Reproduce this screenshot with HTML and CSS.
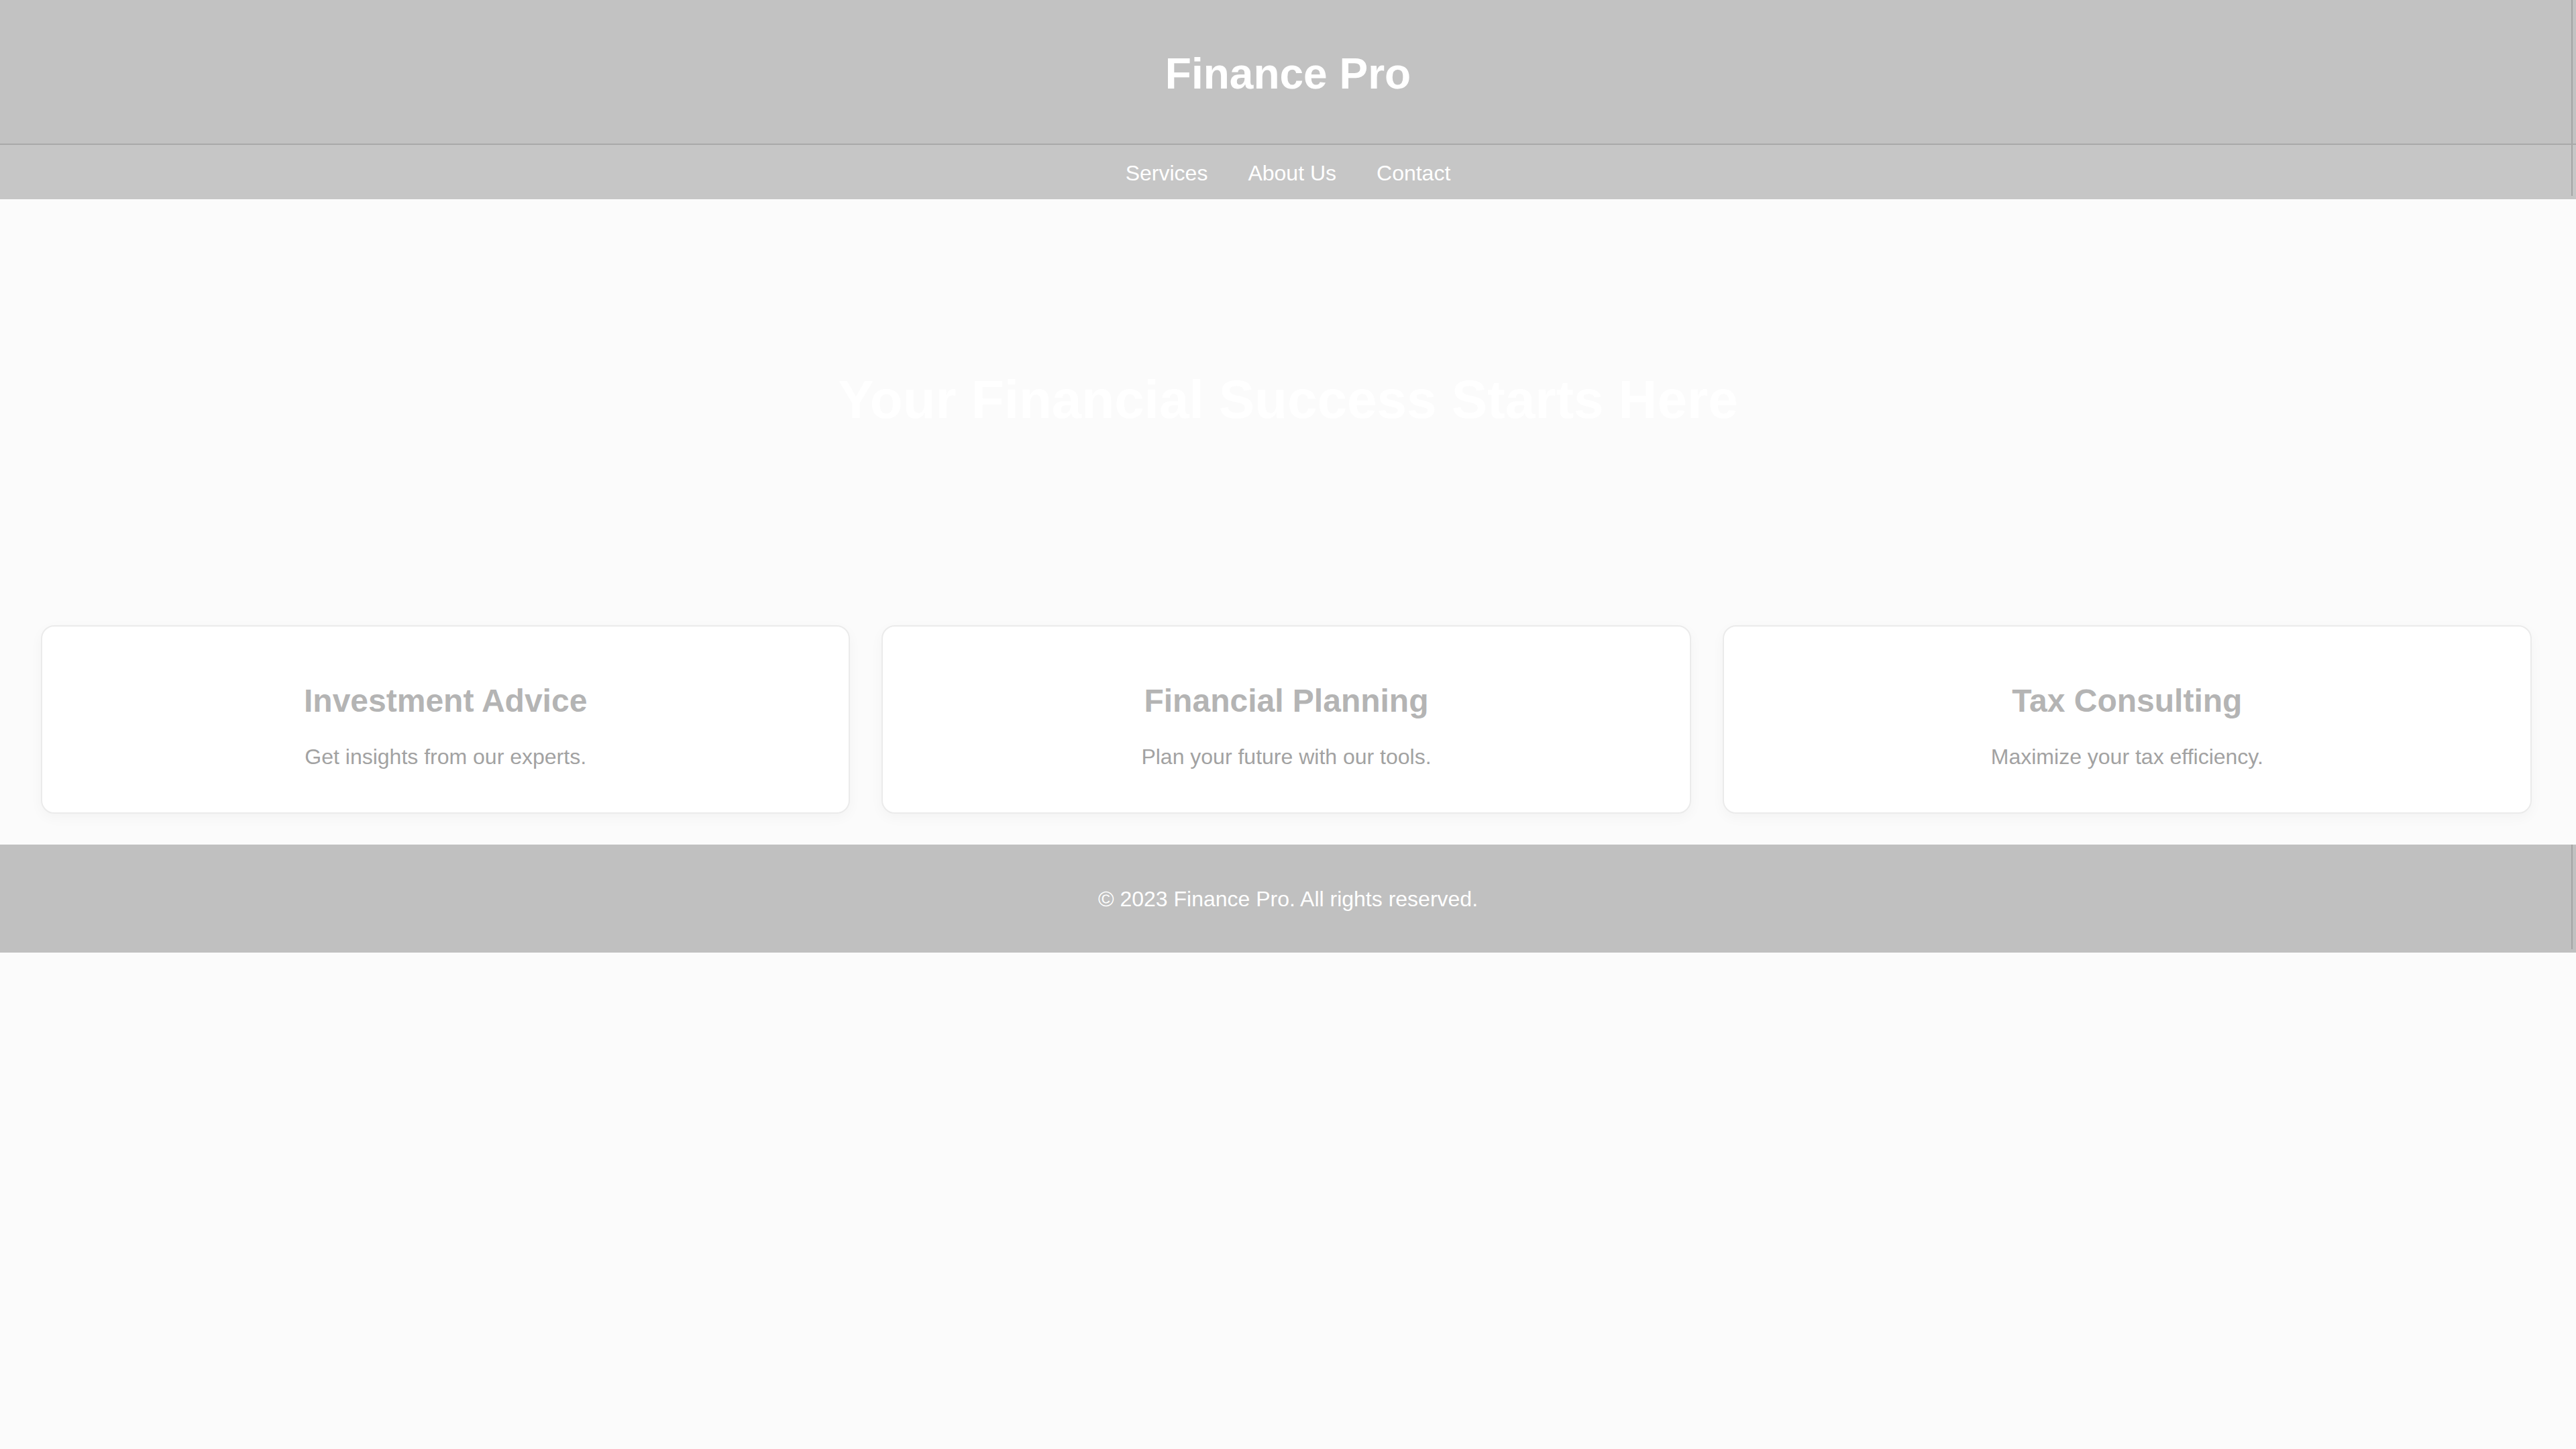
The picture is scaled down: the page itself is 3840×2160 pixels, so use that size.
FILE: index.html
```html
<!DOCTYPE html>
<html lang="en">
<head>
<meta charset="utf-8">
<title>Finance Pro</title>
<link rel="stylesheet" href="styles.css">
</head>
<body>
<header class="site-header">
  <h1 class="brand">Finance Pro</h1>
</header>
<nav class="site-nav">
  <a class="nav-link" href="#services">Services</a>
  <a class="nav-link" href="#about">About Us</a>
  <a class="nav-link" href="#contact">Contact</a>
</nav>
<section class="hero">
  <h2 class="hero-title">Your Financial Success Starts Here</h2>
</section>
<section class="services" id="services">
  <div class="card">
    <h3 class="card-title">Investment Advice</h3>
    <p class="card-text">Get insights from our experts.</p>
  </div>
  <div class="card">
    <h3 class="card-title">Financial Planning</h3>
    <p class="card-text">Plan your future with our tools.</p>
  </div>
  <div class="card">
    <h3 class="card-title">Tax Consulting</h3>
    <p class="card-text">Maximize your tax efficiency.</p>
  </div>
</section>
<footer class="site-footer">
  <p class="footer-text">&copy; 2023 Finance Pro. All rights reserved.</p>
</footer>
</body>
</html>
```
FILE: styles.css
```css
* { box-sizing: border-box; }

html, body {
  margin: 0;
  padding: 0;
}

body {
  background: #fbfbfb;
  font-family: "Liberation Sans", Arial, Helvetica, sans-serif;
  min-height: 2160px;
}

.site-header {
  background:
    linear-gradient(to left, transparent 5px, #a4a4a4 5px, #a4a4a4 7px, transparent 7px),
    #c2c2c2;
  padding: 73px 0 67px;
  border-bottom: 2px solid #a9a9a9;
  text-align: center;
}

.brand {
  margin: 0;
  font-size: 64px;
  line-height: 74px;
  font-weight: 700;
  color: #ffffff;
}

.site-nav {
  background:
    linear-gradient(to left, transparent 5px, #a4a4a4 5px, #a4a4a4 7px, transparent 7px) top left / 100% calc(100% - 5px) no-repeat,
    #c6c6c6;
  padding: 24px 0 20px;
  display: flex;
  justify-content: center;
  gap: 60px;
}

.nav-link {
  color: #ffffff;
  text-decoration: none;
  font-size: 32px;
  line-height: 37px;
}

.hero {
  padding: 253px 0 242px;
  text-align: center;
}

.hero-title {
  margin: 0;
  font-size: 80px;
  line-height: 92px;
  font-weight: 700;
  color: #ffffff;
}

.services {
  padding: 48px 66px 46px 61px;
  display: grid;
  grid-template-columns: repeat(3, 1fr);
  gap: 47px;
}

.card {
  background: #ffffff;
  border: 2px solid #ebebeb;
  border-radius: 20px;
  box-shadow: 0 6px 20px rgba(0, 0, 0, 0.035);
  padding: 83px 40px 64px;
  text-align: center;
}

.card-title {
  margin: 0 0 38px;
  font-size: 48px;
  line-height: 55px;
  font-weight: 700;
  color: #b4b4b4;
}

.card-text {
  margin: 0;
  font-size: 32px;
  line-height: 37px;
  color: #a2a2a2;
}

.site-footer {
  background:
    linear-gradient(to left, transparent 5px, #a4a4a4 5px, #a4a4a4 7px, transparent 7px) top left / 100% calc(100% - 5px) no-repeat,
    #c0c0c0;
  padding: 63px 0 61px;
  text-align: center;
}

.footer-text {
  margin: 0;
  font-size: 32px;
  line-height: 37px;
  color: #ffffff;
}
```
